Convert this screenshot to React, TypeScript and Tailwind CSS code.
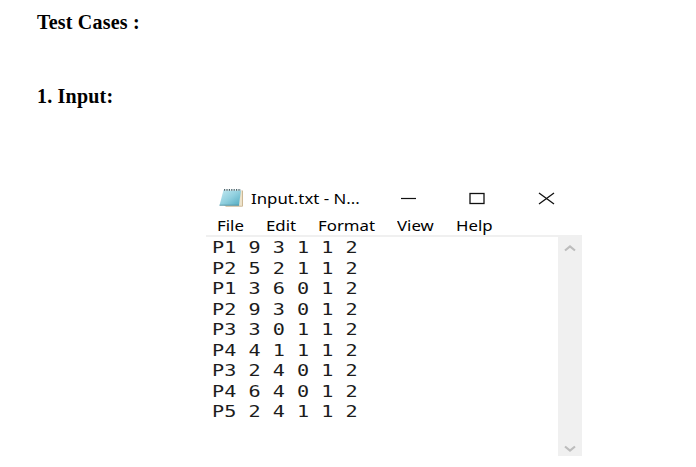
const rows = [
  'P1 9 3 1 1 2',
  'P2 5 2 1 1 2',
  'P1 3 6 0 1 2',
  'P2 9 3 0 1 2',
  'P3 3 0 1 1 2',
  'P4 4 1 1 1 2',
  'P3 2 4 0 1 2',
  'P4 6 4 0 1 2',
  'P5 2 4 1 1 2',
];

function NotepadIcon() {
  return (
    <svg width="26" height="22" viewBox="0 0 26 22" className="shrink-0">
      <defs>
        <linearGradient id="page" x1="0" y1="0" x2="1" y2="1">
          <stop offset="0" stopColor="#c3e9f1" />
          <stop offset="0.5" stopColor="#91d0df" />
          <stop offset="1" stopColor="#4faac0" />
        </linearGradient>
      </defs>
      <path d="M6 18.5h17.5V3.5h1.2v16H8z" fill="#b79a68" />
      <path d="M22 4h2v15l-3-1z" fill="#eee3cb" />
      <path d="M5.5 3H23l-2 15.5H1.5z" fill="url(#page)" />
      <path d="M1.5 18.2H21" stroke="#538f9f" strokeWidth="0.8" />
      <path d="M6 3.3H23" stroke="#d7edf0" />
      <path d="M6 2.8h17" stroke="#4b626a" strokeWidth="1.8" strokeDasharray="1.2 1.2" />
    </svg>
  );
}

function TitleBar() {
  return (
    <div className="flex h-[34px] items-center pl-3">
      <NotepadIcon />
      <div className="ml-[7px] w-[134px] text-[15px] text-black">
        <span className="inline-block origin-left scale-x-[1.12] whitespace-nowrap">Input.txt - N...</span>
      </div>
      <svg width="180" height="16" viewBox="0 0 180 16" className="ml-[8px] shrink-0" fill="none" stroke="#111">
        <path d="M8 8.5h15" strokeWidth="1.2" />
        <rect x="77" y="3.5" width="14" height="10" strokeWidth="1.3" />
        <path d="M146 3l15 11M161 3l-15 11" strokeWidth="1.3" />
      </svg>
    </div>
  );
}

function MenuBar() {
  return (
    <div className="flex h-[22px] items-center border-b-2 border-[#f0f0f0] pl-[11px] text-[14px] text-black">
      <span className="w-[49px]"><span className="inline-block origin-left scale-x-[1.2]">File</span></span>
      <span className="w-[52px]"><span className="inline-block origin-left scale-x-[1.2]">Edit</span></span>
      <span className="w-[79px]"><span className="inline-block origin-left scale-x-[1.2]">Format</span></span>
      <span className="w-[59px]"><span className="inline-block origin-left scale-x-[1.2]">View</span></span>
      <span><span className="inline-block origin-left scale-x-[1.2]">Help</span></span>
    </div>
  );
}

function ScrollBar() {
  return (
    <div className="flex w-6 flex-col items-center justify-between bg-[#f0f0f0] pt-[6px] pb-[2px]">
      <svg width="12" height="10" viewBox="0 0 12 10" fill="none" stroke="#bdbdbd" strokeWidth="2.2"><path d="M1 7.5l5-4 5 4" /></svg>
      <svg width="12" height="10" viewBox="0 0 12 10" fill="none" stroke="#bdbdbd" strokeWidth="2.2"><path d="M1 2.5l5 4 5-4" /></svg>
    </div>
  );
}

export default function App() {
  return (
    <main className="h-[467px] w-[696px] overflow-hidden bg-white text-black">
      <div className="flex h-[181px] flex-col pt-[10px] pl-[37px] font-['Liberation_Serif',serif] text-[20px] leading-6 font-bold">
        <h1 className="mb-[50px] tracking-[0.2px]">Test Cases :</h1>
        <h2 className="tracking-[0.2px]">1. Input:</h2>
      </div>
      <section className="ml-[206px] flex h-[275px] w-[376px] flex-col font-['Noto_Sans',sans-serif]">
        <TitleBar />
        <MenuBar />
        <div className="flex grow">
          <pre className="grow pt-px pl-[6px] font-['DejaVu_Sans_Mono',monospace] text-[16px] leading-[20.5px] text-[#1c1c1c]">
            {rows.map((row, i) => (
              <div key={i} className="w-[120px] origin-left scale-x-[1.26]">{row}</div>
            ))}
          </pre>
          <ScrollBar />
        </div>
      </section>
    </main>
  );
}
